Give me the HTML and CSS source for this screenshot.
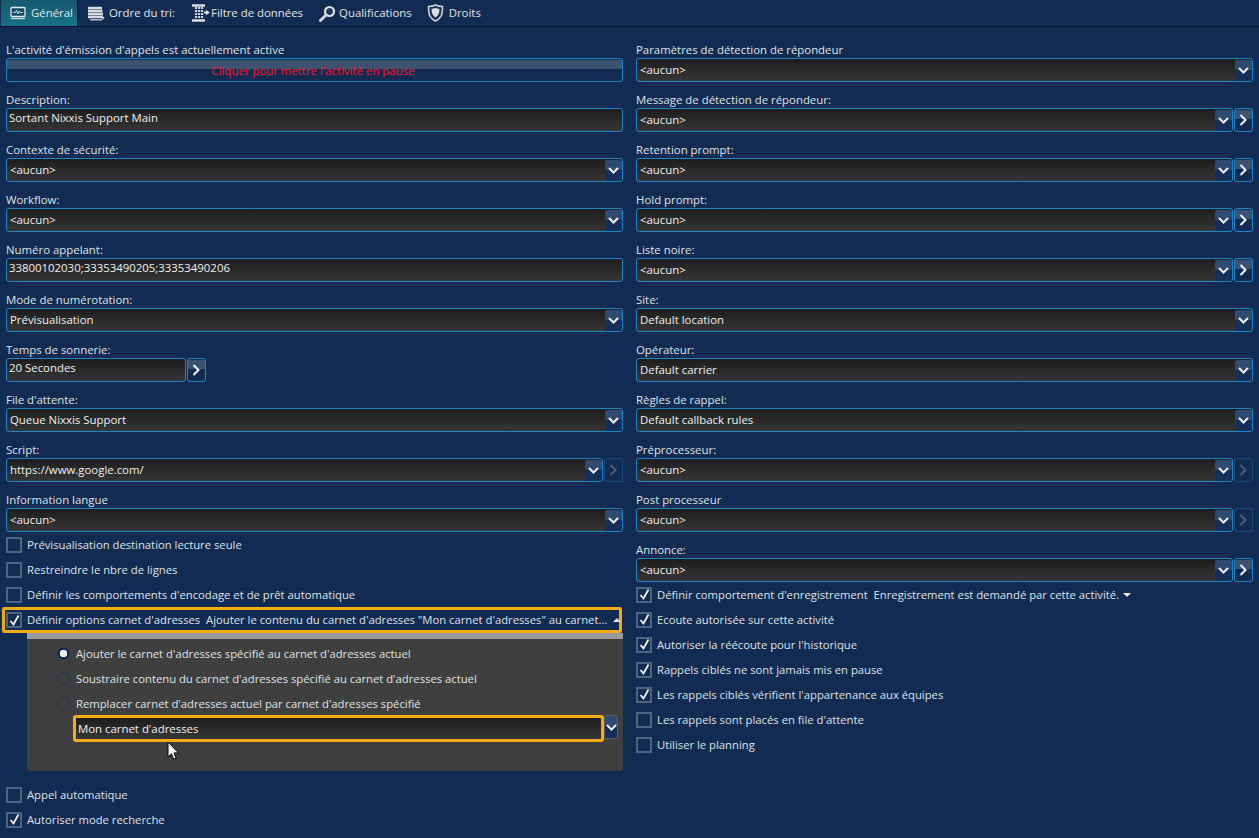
FILE: index.html
```html
<!DOCTYPE html>
<html lang="fr">
<head>
<meta charset="utf-8">
<title>Activité</title>
<link rel="stylesheet" href="styles.css">
</head>
<body>
<nav class="tabs">
  <div class="tab active">
    <svg class="ico" width="16" height="14" viewBox="0 0 16 14"><rect x="1" y="1.500" width="14" height="9" rx="1" fill="#1a4a62" stroke="#e6eaec" stroke-width="1.300"/><path d="M3 6.500h2.500l1-2.500 1.500 4 1.200-3 .8 1.500H13" fill="none" stroke="#a8dbe6"/><path d="M1 12.500h14" stroke="#c9d4da" stroke-width="1.400"/></svg>
    <span>Général</span>
  </div>
  <div class="tab t-ordre">
    <svg class="ico" width="18" height="15" viewBox="0 0 18 15"><path d="M1 2h14M1 5h14.500M1 8h15M1 11h15" stroke="#d9dde2" stroke-width="2.500"/><path d="M3 13.800h12" stroke="#c4c9d0" stroke-width="1.400"/><path d="M14.500 11h3L16 14z" fill="#d9dde2"/></svg>
    <span>Ordre du tri:</span>
  </div>
  <div class="tab t-filtre">
    <svg class="ico" width="18" height="18" viewBox="0 0 18 18"><path d="M0 1.500h13M0 16.500h13" stroke="#d9dde2" stroke-width="2.400"/><path d="M4 3v12M7 3v12M10 3v12" stroke="#cfd4da" stroke-width="2.200" stroke-dasharray="2 1"/><path d="M12 8.500h2" stroke="#e2e5e8" stroke-width="1.800"/><path d="M14 6l4 2.500-4 2.500z" fill="#e2e5e8"/></svg>
    <span>Filtre de données</span>
  </div>
  <div class="tab t-qualif">
    <svg class="ico" width="17" height="17" viewBox="0 0 17 17"><circle cx="10.500" cy="6.500" r="4.500" fill="#1a3a63" stroke="#e0e3e8" stroke-width="2.200"/><path d="M7 10l-5.500 5.500" stroke="#d2d6dc" stroke-width="3" stroke-linecap="round"/></svg>
    <span>Qualifications</span>
  </div>
  <div class="tab t-droits">
    <svg class="ico" width="17" height="18" viewBox="0 0 17 18"><path d="M1.500 2.500C4 2.500 6.500 2 8.500 1c2 1 4.500 1.500 7 1.500 0 6 0 11-7 14.500-7-3.500-7-8.500-7-14.500z" fill="#1a3050" stroke="#cfd3d8" stroke-width="1.500"/><path d="M4.500 4.800c1.500 0 3-.3 4-.8 1 .5 2.500.8 4 .8 0 3.800-.8 6.700-4 8.700-3.200-2-4-4.900-4-8.700z" fill="#dcdfe3"/></svg>
    <span>Droits</span>
  </div>
</nav>

<main class="form">
  <section class="col">
    <div class="field"><div class="lbl">L'activité d'émission d'appels est actuellement active</div><div class="status"><span>Cliquer pour mettre l'activité en pause</span></div></div>
    <div class="field"><div class="lbl">Description:</div><div class="ctl"><div class="box txt"><span class="val">Sortant Nixxis Support Main</span></div></div></div>
    <div class="field"><div class="lbl">Contexte de sécurité:</div><div class="ctl"><div class="box"><span class="val">&lt;aucun&gt;</span><span class="drop"><svg width="11" height="7" viewBox="0 0 11 7"><path d="M1 1l4.500 4.500L10 1" class="chev"/></svg></span></div></div></div>
    <div class="field"><div class="lbl">Workflow:</div><div class="ctl"><div class="box"><span class="val">&lt;aucun&gt;</span><span class="drop"><svg width="11" height="7" viewBox="0 0 11 7"><path d="M1 1l4.500 4.500L10 1" class="chev"/></svg></span></div></div></div>
    <div class="field"><div class="lbl">Numéro appelant:</div><div class="ctl"><div class="box txt"><span class="val">33800102030;33353490205;33353490206</span></div></div></div>
    <div class="field"><div class="lbl">Mode de numérotation:</div><div class="ctl"><div class="box"><span class="val">Prévisualisation</span><span class="drop"><svg width="11" height="7" viewBox="0 0 11 7"><path d="M1 1l4.500 4.500L10 1" class="chev"/></svg></span></div></div></div>
    <div class="field"><div class="lbl">Temps de sonnerie:</div><div class="ctl"><div class="box txt short"><span class="val">20 Secondes</span></div><span class="next"><svg width="9" height="12" viewBox="0 0 9 12"><path d="M1.500 1l5 5-5 5" class="chev"/></svg></span></div></div>
    <div class="field"><div class="lbl">File d'attente:</div><div class="ctl"><div class="box"><span class="val">Queue Nixxis Support</span><span class="drop"><svg width="11" height="7" viewBox="0 0 11 7"><path d="M1 1l4.500 4.500L10 1" class="chev"/></svg></span></div></div></div>
    <div class="field"><div class="lbl">Script:</div><div class="ctl"><div class="box"><span class="val">https://www.google.com/</span><span class="drop"><svg width="11" height="7" viewBox="0 0 11 7"><path d="M1 1l4.500 4.500L10 1" class="chev"/></svg></span></div><span class="next off"><svg width="9" height="12" viewBox="0 0 9 12"><path d="M1.500 1l5 5-5 5" class="chev"/></svg></span></div></div>
    <div class="field"><div class="lbl">Information langue</div><div class="ctl"><div class="box"><span class="val">&lt;aucun&gt;</span><span class="drop"><svg width="11" height="7" viewBox="0 0 11 7"><path d="M1 1l4.500 4.500L10 1" class="chev"/></svg></span></div></div></div>

    <div class="checks">
      <div class="chk"><span class="cb"></span><span>Prévisualisation destination lecture seule</span></div>
      <div class="chk"><span class="cb"></span><span>Restreindre le nbre de lignes</span></div>
      <div class="chk"><span class="cb"></span><span>Définir les comportements d'encodage et de prêt automatique</span></div>
      <div class="chk hl">
        <span class="cb"><svg width="13" height="13" viewBox="0 0 13 13"><path d="M2.500 7l3 3.500 5-9" class="tick"/></svg></span>
        <span class="hl-text">Définir options carnet d'adresses&nbsp; Ajouter le contenu du carnet d'adresses "Mon carnet d'adresses" au carnet...</span>
        <svg class="caret" width="8" height="4" viewBox="0 0 8 4"><path d="M0 4l4-4 4 4z" fill="#e6e8ea"/></svg>
      </div>
    </div>

    <div class="panel">
      <div class="radio-row"><span class="radio on"></span><span>Ajouter le carnet d'adresses spécifié au carnet d'adresses actuel</span></div>
      <div class="radio-row"><span class="radio"></span><span>Soustraire contenu du carnet d'adresses spécifié au carnet d'adresses actuel</span></div>
      <div class="radio-row"><span class="radio"></span><span>Remplacer carnet d'adresses actuel par carnet d'adresses spécifié</span></div>
      <div class="panel-ctl">
        <div class="box focus"><span class="val">Mon carnet d'adresses</span></div>
        <span class="drop2"><svg width="11" height="7" viewBox="0 0 11 7"><path d="M1 1l4.500 4.500L10 1" class="chev"/></svg></span>
      </div>
    </div>

    <div class="checks bottom">
      <div class="chk"><span class="cb"></span><span>Appel automatique</span></div>
      <div class="chk"><span class="cb"><svg width="13" height="13" viewBox="0 0 13 13"><path d="M2.500 7l3 3.500 5-9" class="tick"/></svg></span><span>Autoriser mode recherche</span></div>
    </div>
  </section>

  <section class="col">
    <div class="field"><div class="lbl">Paramètres de détection de répondeur</div><div class="ctl"><div class="box"><span class="val">&lt;aucun&gt;</span><span class="drop"><svg width="11" height="7" viewBox="0 0 11 7"><path d="M1 1l4.500 4.500L10 1" class="chev"/></svg></span></div></div></div>
    <div class="field"><div class="lbl">Message de détection de répondeur:</div><div class="ctl"><div class="box"><span class="val">&lt;aucun&gt;</span><span class="drop"><svg width="11" height="7" viewBox="0 0 11 7"><path d="M1 1l4.500 4.500L10 1" class="chev"/></svg></span></div><span class="next"><svg width="9" height="12" viewBox="0 0 9 12"><path d="M1.500 1l5 5-5 5" class="chev"/></svg></span></div></div>
    <div class="field"><div class="lbl">Retention prompt:</div><div class="ctl"><div class="box"><span class="val">&lt;aucun&gt;</span><span class="drop"><svg width="11" height="7" viewBox="0 0 11 7"><path d="M1 1l4.500 4.500L10 1" class="chev"/></svg></span></div><span class="next"><svg width="9" height="12" viewBox="0 0 9 12"><path d="M1.500 1l5 5-5 5" class="chev"/></svg></span></div></div>
    <div class="field"><div class="lbl">Hold prompt:</div><div class="ctl"><div class="box"><span class="val">&lt;aucun&gt;</span><span class="drop"><svg width="11" height="7" viewBox="0 0 11 7"><path d="M1 1l4.500 4.500L10 1" class="chev"/></svg></span></div><span class="next"><svg width="9" height="12" viewBox="0 0 9 12"><path d="M1.500 1l5 5-5 5" class="chev"/></svg></span></div></div>
    <div class="field"><div class="lbl">Liste noire:</div><div class="ctl"><div class="box"><span class="val">&lt;aucun&gt;</span><span class="drop"><svg width="11" height="7" viewBox="0 0 11 7"><path d="M1 1l4.500 4.500L10 1" class="chev"/></svg></span></div><span class="next"><svg width="9" height="12" viewBox="0 0 9 12"><path d="M1.500 1l5 5-5 5" class="chev"/></svg></span></div></div>
    <div class="field"><div class="lbl">Site:</div><div class="ctl"><div class="box"><span class="val">Default location</span><span class="drop"><svg width="11" height="7" viewBox="0 0 11 7"><path d="M1 1l4.500 4.500L10 1" class="chev"/></svg></span></div></div></div>
    <div class="field"><div class="lbl">Opérateur:</div><div class="ctl"><div class="box"><span class="val">Default carrier</span><span class="drop"><svg width="11" height="7" viewBox="0 0 11 7"><path d="M1 1l4.500 4.500L10 1" class="chev"/></svg></span></div></div></div>
    <div class="field"><div class="lbl">Règles de rappel:</div><div class="ctl"><div class="box"><span class="val">Default callback rules</span><span class="drop"><svg width="11" height="7" viewBox="0 0 11 7"><path d="M1 1l4.500 4.500L10 1" class="chev"/></svg></span></div></div></div>
    <div class="field"><div class="lbl">Préprocesseur:</div><div class="ctl"><div class="box"><span class="val">&lt;aucun&gt;</span><span class="drop"><svg width="11" height="7" viewBox="0 0 11 7"><path d="M1 1l4.500 4.500L10 1" class="chev"/></svg></span></div><span class="next off"><svg width="9" height="12" viewBox="0 0 9 12"><path d="M1.500 1l5 5-5 5" class="chev"/></svg></span></div></div>
    <div class="field"><div class="lbl">Post processeur</div><div class="ctl"><div class="box"><span class="val">&lt;aucun&gt;</span><span class="drop"><svg width="11" height="7" viewBox="0 0 11 7"><path d="M1 1l4.500 4.500L10 1" class="chev"/></svg></span></div><span class="next off"><svg width="9" height="12" viewBox="0 0 9 12"><path d="M1.500 1l5 5-5 5" class="chev"/></svg></span></div></div>
    <div class="field"><div class="lbl">Annonce:</div><div class="ctl"><div class="box"><span class="val">&lt;aucun&gt;</span><span class="drop"><svg width="11" height="7" viewBox="0 0 11 7"><path d="M1 1l4.500 4.500L10 1" class="chev"/></svg></span></div><span class="next"><svg width="9" height="12" viewBox="0 0 9 12"><path d="M1.500 1l5 5-5 5" class="chev"/></svg></span></div></div>

    <div class="checks">
      <div class="chk"><span class="cb"><svg width="13" height="13" viewBox="0 0 13 13"><path d="M2.500 7l3 3.500 5-9" class="tick"/></svg></span><span>Définir comportement d'enregistrement&nbsp; Enregistrement est demandé par cette activité.</span><svg class="caret down" width="8" height="4" viewBox="0 0 8 4"><path d="M0 0l4 4 4-4z" fill="#e6e8ea"/></svg></div>
      <div class="chk"><span class="cb"><svg width="13" height="13" viewBox="0 0 13 13"><path d="M2.500 7l3 3.500 5-9" class="tick"/></svg></span><span>Ecoute autorisée sur cette activité</span></div>
      <div class="chk"><span class="cb"><svg width="13" height="13" viewBox="0 0 13 13"><path d="M2.500 7l3 3.500 5-9" class="tick"/></svg></span><span>Autoriser la réécoute pour l'historique</span></div>
      <div class="chk"><span class="cb"><svg width="13" height="13" viewBox="0 0 13 13"><path d="M2.500 7l3 3.500 5-9" class="tick"/></svg></span><span>Rappels ciblés ne sont jamais mis en pause</span></div>
      <div class="chk"><span class="cb"><svg width="13" height="13" viewBox="0 0 13 13"><path d="M2.500 7l3 3.500 5-9" class="tick"/></svg></span><span>Les rappels ciblés vérifient l'appartenance aux équipes</span></div>
      <div class="chk"><span class="cb"></span><span>Les rappels sont placés en file d'attente</span></div>
      <div class="chk"><span class="cb"></span><span>Utiliser le planning</span></div>
    </div>
  </section>
</main>

<svg class="cursor" width="13" height="20" viewBox="0 0 13 20"><path d="M1 1v15l3.500-3.200 2.300 5.500 2.400-1-2.300-5.400h4.700z" fill="#fff" stroke="#000"/></svg>
</body>
</html>
```
FILE: styles.css
```css
* { box-sizing: border-box; }
html, body { margin: 0; height: 838px; overflow: hidden; }
body {
  background: #122b52;
  color: #dfe3e6;
  font: 11.4px/16px "Open Sans", "Noto Sans", "Liberation Sans", sans-serif;
  position: relative;
}
svg { display: block; flex: none; }
.tabs {
  height: 27px;
  display: flex;
  align-items: flex-start;
  padding-left: 1px;
  border-bottom: 1px solid #0a1324;
}
.tab {
  height: 26px;
  display: flex;
  align-items: center;
  color: #e2e5e8;
}
.tab.active {
  width: 77px;
  padding-left: 9px;
  gap: 5px;
  background: linear-gradient(#14596f, #177186);
  border-radius: 2px 2px 0 0;
  border-right: 1px solid #0a1324;
}
.t-ordre { margin-left: 9px; gap: 4px; }
.t-filtre { margin-left: 17px; gap: 1px; }
.t-qualif { margin-left: 16px; gap: 3px; }
.t-droits { margin-left: 15px; gap: 5px; }

.form {
  display: grid;
  grid-template-columns: 617px 617px;
  column-gap: 13px;
  padding: 15px 0 0 6px;
}
.field { height: 50px; }
.lbl { height: 16px; white-space: nowrap; color: #dfe3e6; }
.ctl { display: flex; height: 24px; gap: 1px; }
.box {
  flex: 1;
  min-width: 0;
  height: 24px;
  display: flex;
  align-items: center;
  padding: 0 0 0 3px;
  border: 1px solid #1d86c6;
  border-radius: 3px;
  background: linear-gradient(#1d1d1d, #363636);
  color: #f0f0f0;
}
.box.txt { padding-bottom: 4px; padding-left: 2px; }
.box.short { flex: none; width: 180px; }
.val { flex: 1; white-space: nowrap; }
.drop {
  width: 17px;
  height: 21px;
  display: flex;
  align-items: center;
  justify-content: center;
  background: linear-gradient(#2f4a70 0, #2f4a70 45%, #142f5a 46%);
  border-radius: 2px;
}
.next {
  width: 19px;
  height: 24px;
  display: flex;
  align-items: center;
  justify-content: center;
  border: 1px solid #1d86c6;
  border-radius: 3px;
  background: linear-gradient(#122b52 1px, #3b5372 1px, #3b5372 45%, #122b52 46%);
}
.next.off { border-color: #1b4a78; background: #122b52; }
.next.off .chev { stroke: #4d5f78; }
.chev { fill: none; stroke: #f2f2f2; stroke-width: 2; }
.status {
  height: 24px;
  border: 1px solid #1d86c6;
  border-radius: 3px;
  background: linear-gradient(#122b52 1px, #3d526f 1px, #3d526f 10px, #122b52 10px);
  color: #ff1428;
  text-align: center;
  line-height: 23px;
  padding-right: 3px;
}
.checks { display: flex; flex-direction: column; margin-top: -10px; }
.chk {
  height: 25px;
  display: flex;
  align-items: center;
  gap: 5px;
  white-space: nowrap;
  font-size: 11.27px;
}
.cb {
  width: 16px;
  height: 16px;
  flex: none;
  display: flex;
  align-items: center;
  justify-content: center;
  border: 2px solid #4e6580;
  background: #122b52;
}
.tick { fill: none; stroke: #f4f4f4; stroke-width: 1.800; }
.caret { margin-left: -1px; }
.hl {
  margin-left: -4px;
  width: 620px;
  height: 26px;
  padding-left: 1px;
  border: 3px solid #f5ab13;
  border-radius: 2px;
}
.hl-text { flex: 1; }
.hl .caret { margin: 0 0 0 1px; }
.panel {
  margin-left: 21px;
  height: 138px;
  padding: 2px 5px 0 30px;
  border-top: 6px solid #9b9b9b;
  background: #3f3f3f;
  border-radius: 0 0 4px 4px;
}
.radio-row {
  height: 25px;
  display: flex;
  align-items: center;
  gap: 6px;
  white-space: nowrap;
  font-size: 11.27px;
}
.radio {
  width: 13px;
  height: 13px;
  flex: none;
  border: 1px solid #1b3558;
  border-radius: 50%;
  background: #3f3f3f;
}
.radio.on { background: radial-gradient(#f0f0f0 0 3.500px, #122b52 4px); }
.panel-ctl { display: flex; margin: -1px 0 0 16px; }
.box.focus {
  flex: none;
  width: 531px;
  height: 27px;
  border: 3px solid #f5ab13;
  padding-left: 2px;
}
.drop2 {
  width: 15px;
  height: 24px;
  display: flex;
  align-items: center;
  justify-content: center;
  border: 1px solid #55606e;
  border-radius: 2px;
  background: linear-gradient(#2f4a70 0, #2f4a70 45%, #142f5a 46%);
}
.checks.bottom { margin-top: 11px; }
.cursor { position: absolute; left: 167px; top: 741px; }
```
